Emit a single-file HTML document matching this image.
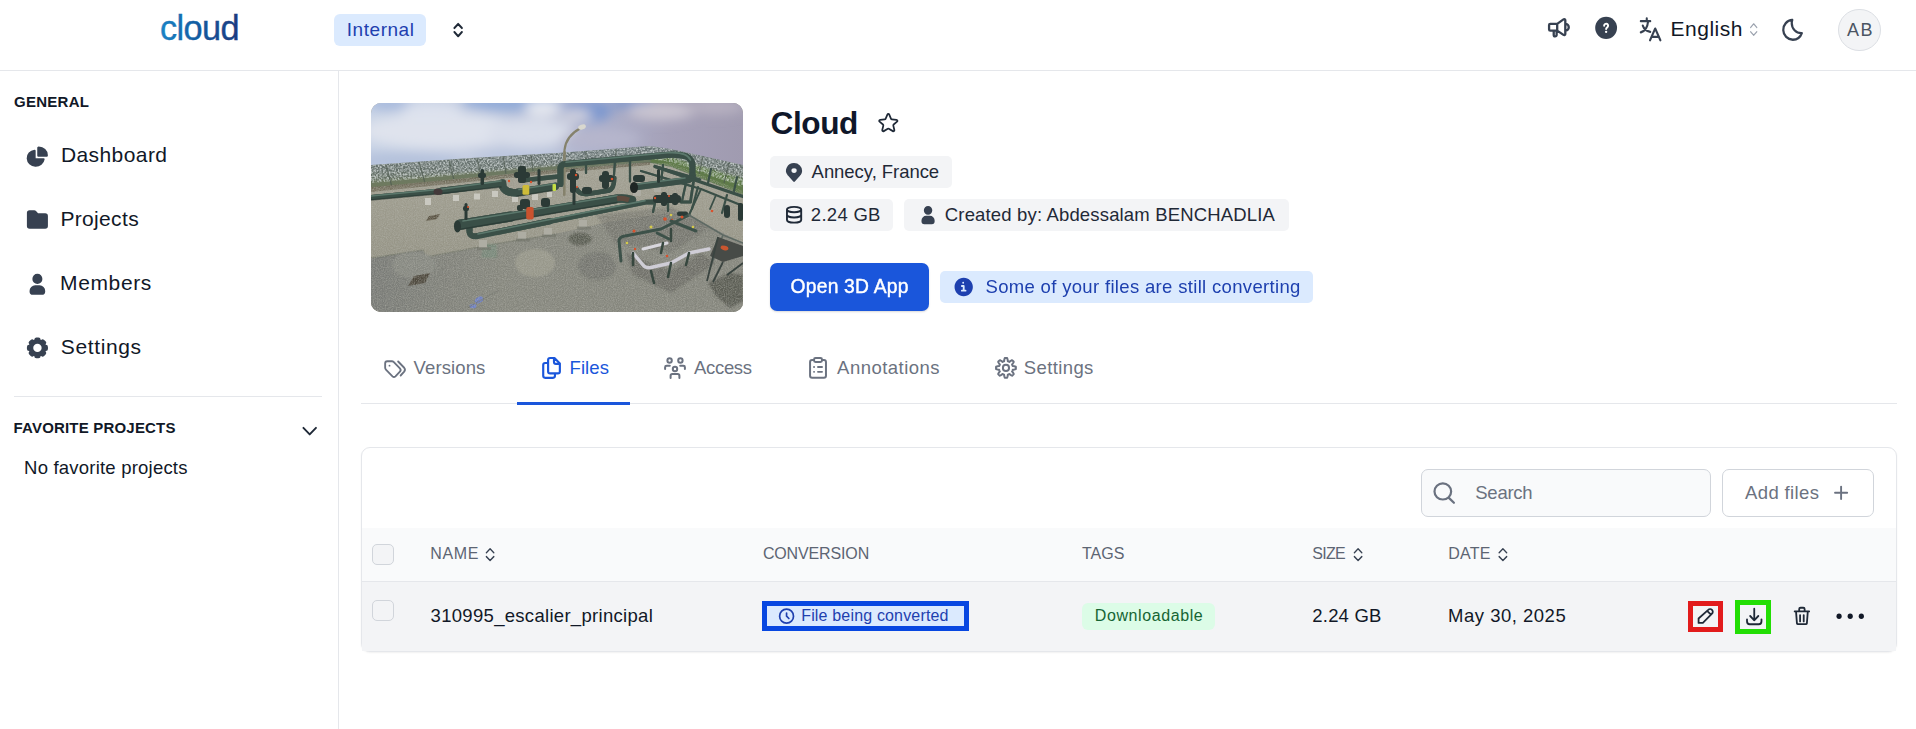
<!DOCTYPE html>
<html lang="en"><head><meta charset="utf-8"><title>Cloud</title>
<style>
*{box-sizing:border-box;margin:0;padding:0}
html,body{width:1916px;height:729px;overflow:hidden;background:#fff}
body{font-family:"Liberation Sans",sans-serif;color:#111827;position:relative}
.a{position:absolute}
.t{position:absolute;white-space:nowrap;line-height:1}
svg{position:absolute;overflow:visible}
#hdr{left:0;top:0;width:1916px;height:71px;border-bottom:1px solid #e5e7eb;background:#fff}
#side{left:0;top:71px;width:339px;height:658px;border-right:1px solid #e5e7eb;background:#fff}
.nav{font-size:21px;color:#111827;left:61px}
.sect{font-size:15px;font-weight:700;color:#111827;left:14px}
.badge{background:#f3f4f6;border-radius:5px;height:32px}
.bt{font-size:18.5px;color:#1f2937}
.tab{font-size:18.5px;color:#6b7280;top:359px}
.th{font-size:16px;color:#5d6573;top:546px}
.td{font-size:18.5px;color:#111827;top:607px}
.ic{fill:#374151}
.st{fill:none;stroke-linecap:round;stroke-linejoin:round}
/*FIT*/
#internal{left:346.8px!important;top:19.7px!important;letter-spacing:0.54px}
#english{left:1670.6px!important;top:17.7px!important;letter-spacing:0.50px}
#ab{left:1847.1px!important;top:20.7px!important;letter-spacing:1.40px}
#general{left:14.1px!important;top:93.7px!important;letter-spacing:0.24px}
#n1{left:60.9px!important;top:143.7px!important;letter-spacing:0.42px}
#n2{left:60.4px!important;top:207.7px!important;letter-spacing:0.34px}
#n3{left:60.1px!important;top:271.7px!important;letter-spacing:0.61px}
#n4{left:60.8px!important;top:335.7px!important;letter-spacing:0.63px}
#fav{left:13.5px!important;top:419.7px!important;letter-spacing:0.19px}
#nofav{left:24.1px!important;top:458.7px!important;letter-spacing:0.21px}
#title{left:770.6px!important;top:107.7px!important;letter-spacing:-0.42px}
#b1{left:811.6px!important;top:162.7px!important;letter-spacing:-0.05px}
#b2{left:810.8px!important;top:205.7px!important;letter-spacing:0.29px}
#b3{left:944.8px!important;top:205.7px!important;letter-spacing:0.16px}
#open{left:790.6px!important;top:277.1px!important;letter-spacing:0.20px}
#info{left:985.5px!important;top:277.7px!important;letter-spacing:0.33px}
#t1{left:413.6px!important;top:358.7px!important;letter-spacing:0.11px}
#t2{left:569.6px!important;top:358.7px!important;letter-spacing:0.06px}
#t3{left:694.0px!important;top:358.7px!important;letter-spacing:-0.32px}
#t4{left:837.1px!important;top:358.7px!important;letter-spacing:0.47px}
#t5{left:1023.8px!important;top:358.7px!important;letter-spacing:0.39px}
#search{left:1475.3px!important;top:483.7px!important;letter-spacing:-0.27px}
#addf{left:1745.0px!important;top:483.7px!important;letter-spacing:0.38px}
#h1{left:430.3px!important;top:545.7px!important;letter-spacing:0.64px}
#h2{left:762.9px!important;top:545.7px!important;letter-spacing:-0.14px}
#h3{left:1081.9px!important;top:545.7px!important;letter-spacing:0.08px}
#h4{left:1312.2px!important;top:545.7px!important;letter-spacing:-0.71px}
#h5{left:1448.2px!important;top:545.7px!important;letter-spacing:0.21px}
#d1{left:430.6px!important;top:606.7px!important;letter-spacing:0.30px}
#conv{left:801.2px!important;top:607.7px!important;letter-spacing:0.17px}
#dl{left:1094.8px!important;top:607.7px!important;letter-spacing:0.59px}
#d4{left:1312.3px!important;top:606.7px!important;letter-spacing:0.20px}
#d5{left:1448.0px!important;top:606.7px!important;letter-spacing:0.51px}
/*ENDFIT*/
</style></head><body>
<!-- HEADER -->
<div id="hdr" class="a"></div>
<svg id="logosvg" style="left:150px;top:0" width="100" height="60" viewBox="0 0 100 60"><defs><linearGradient id="lg" gradientUnits="userSpaceOnUse" x1="10" y1="0" x2="89" y2="0"><stop offset="0" stop-color="#1b84c6"/><stop offset=".5" stop-color="#135a9f"/><stop offset="1" stop-color="#1c3a80"/></linearGradient></defs><text id="logotxt" x="9.900" y="39.800" font-family="Liberation Sans, sans-serif" font-size="34.300" letter-spacing="-0.600" fill="url(#lg)" stroke="url(#lg)" stroke-width=".350">cloud</text></svg>
<div class="a" style="left:334px;top:14px;width:92px;height:32px;border-radius:6px;background:#dbeafe"></div>
<div class="t" id="internal" style="left:347px;top:20px;font-size:19px;color:#1e40af">Internal</div>
<svg id="i-sort0" style="left:449px;top:20px" width="20" height="21" viewBox="0 0 20 21"><g transform="translate(0.15 0.29) scale(0.7496 0.8129)"><path fill="none" stroke="#1f2937" stroke-width="2.6" stroke-linecap="round" stroke-linejoin="round" d="M7 9.500 12 4.500l5 5M7 14.500l5 5 5-5"/></g></svg>
<!-- header right icons -->
<svg id="i-mega" style="left:1544px;top:13px" width="30" height="29" viewBox="0 0 30 29"><g transform="translate(0.46 0.66) scale(1.1579 1.1283)"><path fill="none" stroke="#374151" stroke-width="2" stroke-linecap="round" stroke-linejoin="round" d="M11 9H5a1 1 0 0 0-1 1v4a1 1 0 0 0 1 1h6m0-6v6m0-6 5.419-3.870A1 1 0 0 1 18 5.942v12.114a1 1 0 0 1-1.581.814L11 15m7 0a3 3 0 0 0 0-6M8 15v3.900a1.250 1.250 0 0 0 2.500 0V15"/></g></svg>
<svg id="i-help" style="left:1593px;top:14px" width="28" height="29" viewBox="0 0 28 29"><g transform="translate(0.01 0.47) scale(1.0925 1.1150)"><circle cx="12" cy="12" r="10" fill="#374151"/><path fill="none" stroke="#fff" stroke-width="1.800" stroke-linecap="round" stroke-linejoin="round" d="M10.200 10.100a1.800 1.800 0 1 1 2.800 1.500c-.600.400-1 .800-1 1.500"/><circle cx="12" cy="15.600" r="1.050" fill="#fff"/></g></svg>
<svg id="i-lang" style="left:1638px;top:15px" width="26" height="28" viewBox="0 0 26 28"><g transform="translate(0.32 0.26) scale(0.9933 1.0846)"><path fill="none" stroke="#374151" stroke-width="2.1" stroke-linecap="round" stroke-linejoin="round" d="M8.500 3v2.500M2.500 5.500h9.500M9.800 5.800C9.300 11 6.500 14.500 2.500 15.800M4.500 9.500c1 2.800 3.500 5 7.500 5.800M11.800 23 17 12.300 22.200 23M13.200 20h7.600"/></g></svg>
<div class="t" id="english" style="left:1671px;top:18px;font-size:21px;color:#111827">English</div>
<svg id="i-sort1" style="left:1746px;top:21px" width="16" height="19" viewBox="0 0 16 19"><g transform="translate(0.93 0.16) scale(0.5646 0.7029)"><path fill="none" stroke="#9ca3af" stroke-width="1.9" stroke-linecap="round" stroke-linejoin="round" d="M6.500 9 12 3.800 17.500 9M6.500 15l5.500 5.200L17.500 15"/></g></svg>
<svg id="i-moon" style="left:1780px;top:16px" width="27" height="29" viewBox="0 0 27 29"><g transform="translate(0.07 0.64) scale(1.0621 1.1004)"><path fill="none" stroke="#374151" stroke-width="2.1" stroke-linecap="round" stroke-linejoin="round" d="M12 21a9 9 0 0 1-.500-17.986V3c-.354.966-.500 1.911-.500 3a9 9 0 0 0 9 9c.239 0 .254.018.488 0A9.004 9.004 0 0 1 12 21Z"/></g></svg>
<div class="a" style="left:1838.3px;top:8.9px;width:42.4px;height:42.4px;border-radius:50%;background:#f3f4f6;border:1px solid #dcdfe4"></div>
<div class="t" id="ab" style="left:1846px;top:21px;font-size:18px;color:#4b5563">AB</div>
<!-- SIDEBAR -->
<div id="side" class="a"></div>
<div class="t sect" id="general" style="top:94px">GENERAL</div>
<svg id="i-pie" style="left:24px;top:144px" width="28" height="26" viewBox="0 0 28 26"><g transform="translate(0.49 0.59) scale(1.0633 1.0050)"><path fill="#374151" d="M13.500 2c-.178 0-.356.013-.492.022l-.074.005a1 1 0 0 0-.934.998V11a1 1 0 0 0 1 1h7.975a1 1 0 0 0 .998-.934l.005-.074A7.040 7.040 0 0 0 22 10.500 8.500 8.500 0 0 0 13.500 2Z"/><path fill="#374151" d="M10.500 6.025a1 1 0 0 0-1.065-.998 8.500 8.500 0 1 0 9.538 9.539A1 1 0 0 0 17.975 13.500H10.500V6.025Z"/></g></svg>
<div class="t nav" id="n1" style="top:144px">Dashboard</div>
<svg id="i-folder" style="left:24px;top:207px" width="28" height="26" viewBox="0 0 28 26"><g transform="translate(0.80 0.07) scale(1.0508 1.0300)"><path fill="#374151" d="M2,5.600a2.600,2.600 0 0 1 2.600,-2.600h4.300a2.600,2.600 0 0 1 2,.95l1.700,2.050H19.400a2.600,2.600 0 0 1 2.600,2.600v9.800a2.600,2.600 0 0 1 -2.600,2.600H4.600a2.600,2.600 0 0 1 -2.600,-2.600Z"/></g></svg>
<div class="t nav" id="n2" style="top:208px">Projects</div>
<svg id="i-user" style="left:25px;top:271px" width="26" height="26" viewBox="0 0 26 26"><g transform="translate(0.35 0.65) scale(1.0029 1.0092)"><path fill="#374151" d="M12 2.200a5 5 0 1 0 0 10 5 5 0 0 0 0-10ZM4.200 19.600v-.500a5.600 5.600 0 0 1 5.600-5.600h4.400a5.600 5.600 0 0 1 5.600 5.600v.500a3.400 3.400 0 0 1-3.400 3.400H7.600a3.400 3.400 0 0 1-3.400-3.400Z"/></g></svg>
<div class="t nav" id="n3" style="top:272px">Members</div>
<svg id="i-cog" style="left:24px;top:335px" width="28" height="27" viewBox="0 0 28 27"><g transform="translate(0.83 0.54) scale(1.0508 1.0333)"><path fill="#374151" fill-rule="evenodd" d="M9.586 2.586A2 2 0 0 1 11 2h2a2 2 0 0 1 2 2v.089l.473.196.063-.063a2.002 2.002 0 0 1 2.828 0l1.414 1.414a2 2 0 0 1 0 2.827l-.063.064.196.473H20a2 2 0 0 1 2 2v2a2 2 0 0 1-2 2h-.089l-.196.473.063.063a2.002 2.002 0 0 1 0 2.828l-1.414 1.414a2 2 0 0 1-2.828 0l-.063-.063-.473.196V20a2 2 0 0 1-2 2h-2a2 2 0 0 1-2-2v-.089l-.473-.196-.063.063a2.002 2.002 0 0 1-2.828 0l-1.414-1.414a2 2 0 0 1 0-2.827l.063-.064L4.089 15H4a2 2 0 0 1-2-2v-2a2 2 0 0 1 2-2h.090l.195-.473-.063-.063a2 2 0 0 1 0-2.828l1.414-1.414a2 2 0 0 1 2.827 0l.064.063L9 4.089V4a2 2 0 0 1 .586-1.414ZM8 12a4 4 0 1 1 8 0 4 4 0 0 1-8 0Z" clip-rule="evenodd"/></g></svg>
<div class="t nav" id="n4" style="top:336px">Settings</div>
<div class="a" style="left:14px;top:396px;width:308px;height:1px;background:#e5e7eb"></div>
<div class="t sect" id="fav" style="top:420px">FAVORITE PROJECTS</div>
<svg id="i-chev" style="left:298px;top:419px" width="25" height="26" viewBox="0 0 25 26"><g transform="translate(0.11 0.29) scale(0.9650 1.0058)"><path fill="none" stroke="#1f2937" stroke-width="2" stroke-linecap="round" stroke-linejoin="round" d="m5.500 8.500 6.500 6.500 6.500-6.500"/></g></svg>
<div class="t" id="nofav" style="left:25px;top:459px;font-size:18.5px;color:#111827">No favorite projects</div>
<!-- MAIN -->
<div class="a" id="photo" style="left:371px;top:103px;width:372px;height:209px;border-radius:10px;overflow:hidden;background:#8b8a7c"><!--PHOTO--><svg id="photosvg" style="left:0;top:0" width="372" height="209" viewBox="0 0 372 209">
<defs>
<linearGradient id="skyh" x1="0" x2="1" y1="0" y2="0"><stop offset="0" stop-color="#c9d4e6"/><stop offset=".35" stop-color="#c3cbdf"/><stop offset=".6" stop-color="#aeb2cc"/><stop offset=".8" stop-color="#a5a1b8"/><stop offset="1" stop-color="#a09bb0"/></linearGradient>
<linearGradient id="fenceg" x1="0" x2="0" y1="0" y2="1"><stop offset="0" stop-color="#6b7779"/><stop offset=".5" stop-color="#66716b"/><stop offset="1" stop-color="#6a765a"/></linearGradient>
<linearGradient id="gravel" x1="0" x2="0" y1="0" y2="1"><stop offset="0" stop-color="#a3a193"/><stop offset="1" stop-color="#8d8c7e"/></linearGradient>
<linearGradient id="conc" x1="0" x2="1" y1="0" y2="0"><stop offset="0" stop-color="#787a76"/><stop offset=".35" stop-color="#85867d"/><stop offset="1" stop-color="#84857c"/></linearGradient>
<filter id="fb1" x="-20%" y="-20%" width="140%" height="140%"><feGaussianBlur stdDeviation="1"/></filter>
<filter id="fb3" x="-30%" y="-30%" width="160%" height="160%"><feGaussianBlur stdDeviation="3"/></filter>
<filter id="fb6" x="-40%" y="-40%" width="180%" height="180%"><feGaussianBlur stdDeviation="6"/></filter>
<filter id="fb05"><feGaussianBlur stdDeviation=".6"/></filter>
<filter id="noise" x="0" y="0" width="100%" height="100%"><feTurbulence type="fractalNoise" baseFrequency=".9" numOctaves="2" seed="3"/><feColorMatrix type="matrix" values="0 0 0 0 .5  0 0 0 0 .5  0 0 0 0 .45  .9 .9 .9 0 -1.05"/></filter>
<filter id="speck" x="0" y="0" width="100%" height="100%"><feTurbulence type="fractalNoise" baseFrequency=".55" numOctaves="2" seed="8"/><feColorMatrix type="matrix" values="0 0 0 0 .85  0 0 0 0 .89  0 0 0 0 .9  1.5 1.5 1.5 0 -1.85"/></filter>
<clipPath id="fclip"><path d="M0,62 L100,55 186,50 279,43 300,46 372,62 372,84 300,59 279,56 186,63 0,80Z"/></clipPath>
<clipPath id="gclip"><path d="M0,84 L186,66 279,58 300,60 372,88 372,209 0,209Z"/></clipPath>
</defs>
<!-- sky -->
<rect width="372" height="100" fill="url(#skyh)"/>
<g filter="url(#fb6)">
 <ellipse cx="18" cy="0" rx="22" ry="7" fill="#a5b8dc"/>
 <ellipse cx="140" cy="-2" rx="50" ry="11" fill="#93acd8"/>
 <ellipse cx="215" cy="8" rx="26" ry="12" fill="#7b97cf"/>
 <ellipse cx="262" cy="0" rx="22" ry="7" fill="#7f98cc"/>
 <ellipse cx="70" cy="28" rx="80" ry="18" fill="#dfe3ed"/>
 <ellipse cx="160" cy="30" rx="45" ry="15" fill="#d9deea"/>
 <ellipse cx="172" cy="5" rx="18" ry="8" fill="#e6e9f0"/>
 <ellipse cx="60" cy="8" rx="30" ry="8" fill="#dde2ee"/>
 <ellipse cx="30" cy="58" rx="60" ry="9" fill="#b4c1db"/>
 <ellipse cx="150" cy="52" rx="50" ry="6" fill="#b9c5dd"/>
 <ellipse cx="205" cy="12" rx="16" ry="6" fill="#d5d5df"/>
 <ellipse cx="290" cy="8" rx="34" ry="9" fill="#cbc6d1"/>
 <ellipse cx="345" cy="4" rx="30" ry="7" fill="#b9b3c2"/>
 <ellipse cx="230" cy="36" rx="40" ry="10" fill="#b6b6cc"/>
</g>
<!-- fence band -->
<path d="M0,62 L100,55 186,50 279,43 300,46 372,62 372,92 300,64 279,60 186,68 0,86Z" fill="url(#fenceg)"/>
<path d="M279,52 L300,54 372,76 372,92 300,64 279,60Z" fill="#5f7a48" filter="url(#fb1)"/>
<path d="M0,78 L186,62 279,55 279,60 186,68 0,87Z" fill="#6f7b5f" opacity=".75" filter="url(#fb1)"/>
<g clip-path="url(#fclip)"><rect width="372" height="100" filter="url(#speck)" opacity=".62"/></g>
<g stroke="#4e5a50" stroke-width="1.2" opacity=".7"><path d="M15,62 l6,22M48,59 l6,21M78,57 l5,20M106,55 l4,19M132,53 l3,18M160,52 l2,16M215,48v14M245,46v14M332,53l-4,18M358,60l-5,20"/></g>
<!-- ground -->
<path d="M0,86 L186,68 279,60 300,64 372,92 372,209 0,209Z" fill="url(#gravel)"/>
<path d="M0,84 L186,66.500 279,59 279,62 186,70 0,89Z" fill="#6f6a58" opacity=".8" filter="url(#fb05)"/>
<!-- concrete -->
<path d="M0,155 L52,147 55,154 130,140 186,130.500 240,118.500 290,111 312,110 372,140 372,209 0,209Z" fill="url(#conc)"/>
<path d="M0,155 L52,147 55,154 130,140 186,131" fill="none" stroke="#75776b" stroke-width="1.5" opacity=".7"/>
<g filter="url(#fb1)">
 <ellipse cx="164" cy="160" rx="20" ry="14" fill="#97978a"/>
 <ellipse cx="43" cy="162" rx="22" ry="13" fill="#868881"/>
 <ellipse cx="226" cy="163" rx="19" ry="14" fill="#74766f"/>
 <ellipse cx="209" cy="136" rx="11.500" ry="6.500" fill="#5a5d52"/>
 <path d="M112,141 h14 v14 h-16Z" fill="#6f8a78" opacity=".55"/>
 <path d="M337,180 L359,170 372,172 372,198 359,205 344,192Z" fill="#55574f" opacity=".9"/>
 <path d="M255,150 L300,168 330,150 345,160 300,190 262,172Z" fill="#5f615a" opacity=".6"/>
 <path d="M225,112 L300,104 340,124 300,150 245,140Z" fill="#676961" opacity=".5"/>
</g>
<path d="M43,173 l16,-3 -5,10 -17,3Z" fill="#4d483d"/><path d="M58,113 l11,-2 -3,5 -11,2Z" fill="#5d5646"/>
<ellipse cx="108" cy="197" rx="4.500" ry="3" fill="#6d7fc4" transform="rotate(-30 108 197)"/><ellipse cx="102" cy="203" rx="3.500" ry="2.300" fill="#6d7fc4"/>
<path d="M96,205 L128,187" stroke="#6a6c66" stroke-width="1.200" opacity=".6"/>
<rect y="60" width="372" height="149" filter="url(#noise)" clip-path="url(#gclip)" opacity=".55"/>
<!-- support blocks -->
<g fill="#c9c8c0"><rect x="54" y="95" width="6" height="7"/><rect x="82" y="92" width="6" height="6"/><rect x="103" y="90.500" width="6" height="6"/><rect x="121" y="88" width="6" height="6"/><rect x="141" y="93" width="6" height="6"/><rect x="161" y="91" width="6" height="6"/><rect x="176" y="89" width="5" height="5"/></g>
<g fill="#aeada3"><rect x="108" y="137" width="8" height="8"/><rect x="147" y="129" width="8" height="7"/><rect x="173" y="125" width="8" height="7"/><rect x="208" y="117" width="8" height="7"/><rect x="262" y="87" width="8" height="6"/><rect x="283" y="84" width="7" height="5"/></g>
<g fill="#6f7268" opacity=".55" filter="url(#fb05)"><rect x="106" y="144" width="14" height="3"/><rect x="145" y="135.500" width="14" height="3"/><rect x="171" y="131.500" width="14" height="3"/><rect x="206" y="123.500" width="14" height="3"/></g>
<!-- lamp post -->
<path d="M193.200,92.500 L193.500,47 Q195,33 209,25.500" fill="none" stroke="#85826c" stroke-width="2.200"/><ellipse cx="211" cy="24" rx="4" ry="2.500" fill="#d9d8cf" transform="rotate(-20 211 24)"/>
<!-- pipes -->
<g fill="none" stroke-linecap="round" stroke-linejoin="round">
 <g stroke="#3a4f47">
  <path d="M0,94.500 L70,88" stroke-width="5"/><path d="M70,88 L130,80.500" stroke-width="6.800"/>
  <path d="M131.500,80 Q131,89.500 145,89.800 L184,83.400" stroke-width="7.500"/>
  <path d="M150,77.500 L188,73.500" stroke-width="4.500"/>
  <path d="M189.500,81 V66 Q189.500,61.400 194,61 L296.500,51.800 Q321,50 321.500,62 V73" stroke-width="6.200"/>
  <path d="M321.500,73 Q321,76.500 314,77.500 L263,84.200" stroke-width="6.800"/>
  <path d="M206,86.500 Q208,91.500 216,91 L238,87.500 Q243,86 243.300,75" stroke-width="4.500"/>
  <path d="M88.500,121.800 L140,113.500" stroke-width="10"/><path d="M140,113.500 L192.500,104.600 246,95.700 Q254,94.800 261,97" stroke-width="8.500"/>
  <path d="M98.500,124 V129 Q99,134 105.500,133.200 L178.800,118.300" stroke-width="6"/><path d="M178.800,118.300 L274.800,99.100 283,99" stroke-width="4.800"/>
  <path d="M284,63.500 L372,93.500" stroke-width="3.200"/>
  <path d="M288.500,64.800 L329,76.500" stroke-width="2.500"/>
  <path d="M270,68 L330,86 372,103" stroke-width="2.200"/>
  <path d="M310,99 H319.500 L322.500,79" stroke-width="2.800"/>
  <path d="M259,57V78.500M215,60v10M244,58l-1,14M292,62l-2,18M315,80l-4,18M327,84l-6,22M356,92l-5,18M340,66l-3,14M366,74l-3,14M297,100v8M284,100l-2,9" stroke-width="2.200"/>
  <path d="M330,86 L318,112 M345,92 l-6,14" stroke-width="1.800"/>
 </g>
 <g stroke="#678679" stroke-width="1.600" opacity=".75">
  <path d="M0,93 L70,86.300 130,78"/><path d="M148,86.500 184,80.800"/><path d="M195,59.200 L296.500,49.800 Q316,48.500 319.500,57"/><path d="M92,118 140,110.300 192.500,101.500 246,92.800"/><path d="M266,81.300 L314,75"/><path d="M107,131 178.800,116.500 274,97.600"/>
 </g>
 <g stroke="#22302c" stroke-width="1.500" opacity=".55">
  <path d="M90,126.300 140,117.800 192.500,108.500 246,99.500"/><path d="M0,97 70,90.500 130,84"/><path d="M146,93.200 184,87"/>
 </g>
</g>
<!-- valves / blobs -->
<g fill="#2b3a36">
 <ellipse cx="86.500" cy="123.500" rx="3.500" ry="6"/><ellipse cx="263" cy="84.500" rx="4" ry="5.500" fill="#1f2624"/><ellipse cx="67" cy="88.700" rx="4.500" ry="3.200" fill="#43393a"/>
 <rect x="109.500" y="66" width="3.500" height="16" rx="1.500"/><rect x="107" y="70" width="8" height="5" rx="2"/>
 <rect x="147" y="63" width="8" height="17" rx="2.500"/><rect x="143" y="69" width="16" height="6" rx="2.500"/><rect x="166.500" y="66" width="3" height="16" rx="1.500"/>
 <rect x="199" y="66" width="6" height="24" rx="2.500"/><rect x="196" y="70" width="12" height="7" rx="3"/>
 <rect x="231" y="68" width="7" height="18" rx="3"/><rect x="228" y="72" width="15" height="7" rx="3"/>
 <rect x="262" y="72" width="12" height="7" rx="3"/><rect x="286" y="66" width="3" height="14" rx="1.500"/>
 <rect x="93.500" y="100" width="3" height="17" rx="1.500"/><rect x="92" y="103" width="6" height="5" rx="2"/>
 <rect x="149" y="96" width="10" height="10" rx="3"/><rect x="146" y="102" width="6" height="6" rx="2"/><rect x="170" y="95" width="9" height="9" rx="3"/>
 <rect x="201.500" y="84" width="3" height="18" rx="1.500"/><rect x="211" y="84" width="10" height="7" rx="3"/>
 <rect x="282" y="92" width="28" height="8" rx="3.500"/><rect x="290" y="89" width="6" height="14" rx="2.500"/><rect x="301" y="90" width="6" height="12" rx="2.500"/>
 <rect x="353" y="102" width="6" height="13" rx="3"/><rect x="367" y="100" width="5" height="18" rx="2"/>
 <rect x="306" y="108.500" width="11" height="4.500" rx="2"/>
</g>
<rect x="151.500" y="82" width="6.800" height="9.800" rx="1.500" fill="#cdbb38"/><rect x="181.500" y="81" width="3.500" height="7" rx="1" fill="#c6df45"/>
<rect x="155.200" y="104" width="7.500" height="12.500" rx="2" fill="#c9522e"/>
<path d="M246,95.500 q6,-1 12,1.500" stroke="#6a4a3d" stroke-width="5" fill="none" opacity=".8"/>
<g fill="#d9512c"><circle cx="138" cy="78" r="1.200"/><circle cx="160" cy="79" r="1.200"/><circle cx="205" cy="72" r="1.200"/><circle cx="241" cy="76" r="1.300"/><circle cx="284" cy="95" r="1.200"/><circle cx="301" cy="117" r="1.200"/><circle cx="341" cy="108" r="1.300"/><circle cx="97" cy="104" r="1.100"/><circle cx="206" cy="84" r="1.100"/><circle cx="298" cy="93" r="1.100"/></g>
<!-- equipment cluster -->
<g fill="none" stroke-linecap="round" stroke-linejoin="round">
 <path d="M250,158 L248,138 Q248,134 254,133 L290,126 306,118 318,112" stroke="#3d5149" stroke-width="3"/>
 <path d="M262,150 L272,162 Q275,166 282,164 L300,160 318,150 338,146" stroke="#cfcdd6" stroke-width="3.500"/>
 <path d="M272,146 L296,140" stroke="#d8d6dd" stroke-width="3"/>
 <path d="M280,168 L283,180 M300,160l-3,14M318,150l-3,12M262,150v12M300,126v12M292,140l-2,10" stroke="#37473f" stroke-width="2.500"/>
 <path d="M318,112 L352,132 338,168 M352,132 L372,140" stroke="#5f6a64" stroke-width="1.500"/>
 <path d="M300,118 L325,128 M286,130 l12,6" stroke="#3d5149" stroke-width="3"/>
</g>
<g fill="#d9512c"><circle cx="263" cy="128" r="1.500"/><circle cx="294" cy="116" r="1.800"/><circle cx="311" cy="114" r="1.500"/><circle cx="296" cy="153" r="1.300"/><circle cx="264" cy="146" r="1.200"/></g>
<g fill="#d4c94a"><circle cx="280" cy="124" r="1.500"/><circle cx="300" cy="112" r="1.300"/><circle cx="256" cy="140" r="1.300"/><circle cx="322" cy="124" r="1.300"/></g>
<!-- gate panel -->
<path d="M347,134 L372,143 372,153 352,159 339,153Z" fill="#474b47"/><ellipse cx="353.500" cy="145" rx="4" ry="2.200" fill="#c9562f" transform="rotate(15 353.500 145)"/>
<path d="M347,134 L336,178 M352,159 l-10,20M372,160 l-16,12" stroke="#3a4440" stroke-width="1.800" fill="none"/>
</svg><!--/PHOTO--></div>
<div class="t" id="title" style="left:770px;top:106px;font-size:31.6px;font-weight:700;color:#0f172a">Cloud</div>
<svg id="i-star" style="left:876px;top:109px" width="26" height="27" viewBox="0 0 26 27"><g transform="translate(0.00 0.17) scale(1.0262 1.0550)"><path fill="none" stroke="#1f2937" stroke-width="1.7" stroke-linecap="round" stroke-linejoin="round" d="M11.083 5.104c.350-.800 1.485-.800 1.834 0l1.752 4.022a1 1 0 0 0 .840.597l4.463.342c.900.069 1.255 1.200.556 1.771l-3.330 2.723a1 1 0 0 0-.337 1.016l1.030 4.119c.214.858-.710 1.552-1.474 1.106l-3.913-2.281a1 1 0 0 0-1.008 0L7.583 20.800c-.764.446-1.688-.248-1.474-1.106l1.030-4.119A1 1 0 0 0 6.800 14.560l-3.330-2.723c-.698-.571-.342-1.702.557-1.771l4.462-.342a1 1 0 0 0 .840-.597l1.753-4.022Z"/></g></svg>
<div class="a badge" style="left:770px;top:156px;width:182px;height:31.8px"></div>
<svg id="i-pin" style="left:781px;top:161px" width="27" height="24" viewBox="0 0 27 24"><g transform="translate(0.93 0.24) scale(1.0108 0.9362)"><path fill="#374151" fill-rule="evenodd" d="M11.906 1.994a8.002 8.002 0 0 1 8.090 8.421 7.996 7.996 0 0 1-1.297 3.957.996.996 0 0 1-.133.204l-.108.129c-.178.243-.370.477-.573.699l-5.112 6.224a1 1 0 0 1-1.545 0L5.982 15.260l-.002-.002a18.146 18.146 0 0 1-.309-.380l-.133-.163a.999.999 0 0 1-.130-.202 7.995 7.995 0 0 1 6.498-12.518ZM14.600 9.997a2.600 2.600 0 1 1-5.200 0 2.600 2.600 0 0 1 5.200 0Z" clip-rule="evenodd"/></g></svg>
<div class="t bt" id="b1" style="left:811px;top:163px">Annecy, France</div>
<div class="a badge" style="left:770px;top:198.9px;width:122.8px;height:31.7px"></div>
<svg id="i-db" style="left:782px;top:203px" width="25" height="25" viewBox="0 0 25 25"><g transform="translate(0.70 0.25) scale(0.9487 0.9583)"><path fill="none" stroke="#1f2937" stroke-width="2" stroke-linecap="round" stroke-linejoin="round" d="M19.500 6.600c0 1.550-3.360 2.800-7.500 2.800s-7.500-1.250-7.500-2.800m15 0c0-1.550-3.360-2.800-7.500-2.800s-7.500 1.250-7.500 2.800m15 0v10.800c0 1.550-3.360 2.800-7.500 2.800s-7.500-1.250-7.500-2.800V6.600m0 5.400c0 1.550 3.360 2.800 7.500 2.800s7.500-1.250 7.500-2.800"/></g></svg>
<div class="t bt" id="b2" style="left:811px;top:206px">2.24 GB</div>
<div class="a badge" style="left:904px;top:198.9px;width:385px;height:31.7px"></div>
<svg id="i-user2" style="left:917px;top:204px" width="23" height="23" viewBox="0 0 23 23"><g transform="translate(0.92 0.02) scale(0.8454 0.8754)"><path fill="#374151" d="M12 2.200a5 5 0 1 0 0 10 5 5 0 0 0 0-10ZM4.200 19.600v-.500a5.600 5.600 0 0 1 5.600-5.600h4.400a5.600 5.600 0 0 1 5.600 5.600v.500a3.400 3.400 0 0 1-3.400 3.400H7.600a3.400 3.400 0 0 1-3.400-3.400Z"/></g></svg>
<div class="t bt" id="b3" style="left:945px;top:206px">Created by: Abdessalam BENCHADLIA</div>
<div class="a" style="left:770px;top:263px;width:159px;height:48px;border-radius:7px;background:#1a56db;box-shadow:0 1px 2px rgba(0,0,0,.15)"></div>
<div class="t" id="open" style="left:791px;top:277px;font-size:19.3px;font-weight:400;-webkit-text-stroke:.4px #fff;color:#fff">Open 3D App</div>
<div class="a" style="left:940px;top:271px;width:373px;height:32px;border-radius:5px;background:#dbeafe"></div>
<svg id="i-info" style="left:952px;top:275px" width="24" height="25" viewBox="0 0 24 25"><g transform="translate(0.71 0.87) scale(0.9158 0.9225)"><path fill="#1e40af" fill-rule="evenodd" d="M2 12C2 6.477 6.477 2 12 2s10 4.477 10 10-4.477 10-10 10S2 17.523 2 12Zm9.408-5.500a1 1 0 1 0 0 2h.010a1 1 0 1 0 0-2h-.010ZM10 10a1 1 0 1 0 0 2h1v3h-1a1 1 0 1 0 0 2h4a1 1 0 1 0 0-2h-1v-4a1 1 0 0 0-1-1h-2Z" clip-rule="evenodd"/></g></svg>
<div class="t" id="info" style="left:986px;top:278px;font-size:18.5px;color:#1e40af">Some of your files are still converting</div>
<!-- TABS -->
<div class="a" style="left:361px;top:403px;width:1536px;height:1px;background:#e5e7eb"></div>
<div class="a" style="left:517px;top:402px;width:113px;height:3px;background:#1a56db"></div>
<svg id="i-tags" style="left:383px;top:358px" width="24" height="25" viewBox="0 0 24 25"><g transform="translate(0.30 0.33) scale(0.9279 0.9529)"><path fill="none" stroke="#6b7280" stroke-width="2" stroke-linecap="round" stroke-linejoin="round" d="M2,5.300Q2,3 4.300,3H9.200Q10.300,3 11.100,3.800L17.900,10.600Q19.500,12.300 17.900,14L13.100,18.900Q11.500,20.400 9.900,18.900L2.800,11.900Q2,11.100 2,10Z"/><circle cx="6.700" cy="7.700" r="1" fill="#6b7280"/><path fill="none" stroke="#6b7280" stroke-width="2" stroke-linecap="round" stroke-linejoin="round" d="M16,3.300 22.500,9.900Q24.200,12 22.500,14L18.700,18"/></g></svg>
<div class="t tab" id="t1" style="left:414px">Versions</div>
<svg id="i-files" style="left:540px;top:356px" width="25" height="25" viewBox="0 0 25 25"><g transform="translate(0.28 0.05) scale(0.9787 0.9888)"><path fill="none" stroke="#1a56db" stroke-width="2.2" stroke-linecap="round" stroke-linejoin="round" d="M10,2H14.500L20,7.500V15.500a2,2 0 0 1 -2,2H10a2,2 0 0 1 -2,-2V4a2,2 0 0 1 2,-2ZM14,2.500V6a2,2 0 0 0 2,2H19.500M7.500,7H5a2,2 0 0 0 -2,2V20a2,2 0 0 0 2,2H13a2,2 0 0 0 2,-2V18"/></g></svg>
<div class="t tab" id="t2" style="left:570px;color:#1a56db">Files</div>
<svg id="i-users" style="left:663px;top:356px" width="25" height="25" viewBox="0 0 25 25"><g transform="translate(0.00 0.11) scale(1.0000 0.9908)"><g fill="none" stroke="#6b7280" stroke-width="2" stroke-linecap="round" stroke-linejoin="round"><circle cx="6.600" cy="4.400" r="2.200"/><circle cx="17.400" cy="4.400" r="2.200"/><circle cx="12" cy="13" r="2.200"/><path d="M2.100 13V11.300Q2.100 9.800 3.600 9.800H6.800M21.900 13V11.300Q21.900 9.800 20.400 9.800H17.200M7.600 22.100V19.700Q7.600 18 9.300 18H14.700Q16.400 18 16.400 19.700V22.100"/></g></g></svg>
<div class="t tab" id="t3" style="left:694px">Access</div>
<svg id="i-clip" style="left:806px;top:356px" width="25" height="25" viewBox="0 0 25 25"><g transform="translate(0.09 0.05) scale(0.9938 0.9888)"><g fill="none" stroke="#6b7280" stroke-width="2" stroke-linecap="round" stroke-linejoin="round"><rect width="8" height="4" x="8" y="2" rx="1.500" ry="1.500"/><path d="M16 4h2a2 2 0 0 1 2 2v14a2 2 0 0 1-2 2H6a2 2 0 0 1-2-2V6a2 2 0 0 1 2-2h2M12 11h4M12 16h4M8 11h.010M8 16h.010"/></g></g></svg>
<div class="t tab" id="t4" style="left:837px">Annotations</div>
<svg id="i-cog2" style="left:994px;top:356px" width="25" height="25" viewBox="0 0 25 25"><g transform="translate(0.05 0.05) scale(0.9925 0.9888)"><path fill="none" stroke="#6b7280" stroke-width="2" stroke-linecap="round" stroke-linejoin="round" d="M12.00,2.00 12.39,2.01 12.78,2.03 13.18,2.07 13.45,2.83 13.66,3.66 13.80,4.50 13.90,5.26 14.16,5.34 14.42,5.43 14.68,5.53 14.93,5.64 15.18,5.76 15.42,5.89 16.03,5.42 16.72,4.93 17.46,4.49 18.19,4.15 18.49,4.40 18.79,4.66 19.07,4.93 19.34,5.21 19.60,5.51 19.85,5.81 19.51,6.54 19.07,7.28 18.58,7.97 18.11,8.58 18.24,8.82 18.36,9.07 18.47,9.32 18.57,9.58 18.66,9.84 18.74,10.10 19.50,10.20 20.34,10.34 21.17,10.55 21.93,10.82 21.97,11.22 21.99,11.61 22.00,12.00 21.99,12.39 21.97,12.78 21.93,13.18 21.17,13.45 20.34,13.66 19.50,13.80 18.74,13.90 18.66,14.16 18.57,14.42 18.47,14.68 18.36,14.93 18.24,15.18 18.11,15.42 18.58,16.03 19.07,16.72 19.51,17.46 19.85,18.19 19.60,18.49 19.34,18.79 19.07,19.07 18.79,19.34 18.49,19.60 18.19,19.85 17.46,19.51 16.72,19.07 16.03,18.58 15.42,18.11 15.18,18.24 14.93,18.36 14.68,18.47 14.42,18.57 14.16,18.66 13.90,18.74 13.80,19.50 13.66,20.34 13.45,21.17 13.18,21.93 12.78,21.97 12.39,21.99 12.00,22.00 11.61,21.99 11.22,21.97 10.82,21.93 10.55,21.17 10.34,20.34 10.20,19.50 10.10,18.74 9.84,18.66 9.58,18.57 9.32,18.47 9.07,18.36 8.82,18.24 8.58,18.11 7.97,18.58 7.28,19.07 6.54,19.51 5.81,19.85 5.51,19.60 5.21,19.34 4.93,19.07 4.66,18.79 4.40,18.49 4.15,18.19 4.49,17.46 4.93,16.72 5.42,16.03 5.89,15.42 5.76,15.18 5.64,14.93 5.53,14.68 5.43,14.42 5.34,14.16 5.26,13.90 4.50,13.80 3.66,13.66 2.83,13.45 2.07,13.18 2.03,12.78 2.01,12.39 2.00,12.00 2.01,11.61 2.03,11.22 2.07,10.82 2.83,10.55 3.66,10.34 4.50,10.20 5.26,10.10 5.34,9.84 5.43,9.58 5.53,9.32 5.64,9.07 5.76,8.82 5.89,8.58 5.42,7.97 4.93,7.28 4.49,6.54 4.15,5.81 4.40,5.51 4.66,5.21 4.93,4.93 5.21,4.66 5.51,4.40 5.81,4.15 6.54,4.49 7.28,4.93 7.97,5.42 8.58,5.89 8.82,5.76 9.07,5.64 9.32,5.53 9.58,5.43 9.84,5.34 10.10,5.26 10.20,4.50 10.34,3.66 10.55,2.83 10.82,2.07 11.22,2.03 11.61,2.01Z"/><circle cx="12" cy="12" r="3.100" fill="none" stroke="#6b7280" stroke-width="2" stroke-linecap="round" stroke-linejoin="round"/></g></svg>
<div class="t tab" id="t5" style="left:1024px">Settings</div>
<!-- CARD -->
<div class="a" id="card" style="left:361px;top:447px;width:1536px;height:205px;border:1px solid #e5e7eb;border-radius:9px;box-shadow:0 1px 2px rgba(0,0,0,.06);background:#fff">
  <div class="a" style="left:0;top:80px;width:1534px;height:54px;background:#f9fafb;border-bottom:1px solid #e5e7eb"></div>
  <div class="a" style="left:0;top:134px;width:1534px;height:69px;background:#f3f4f6"></div>
</div>
<div class="a" style="left:1421px;top:469px;width:290px;height:48px;border:1px solid #d1d5db;border-radius:7px;background:#f9fafb"></div>
<svg id="i-search" style="left:1430px;top:480px" width="29" height="27" viewBox="0 0 29 27"><g transform="translate(0.61 0.15) scale(1.1100 1.0767)"><path fill="none" stroke="#6b7280" stroke-width="2" stroke-linecap="round" stroke-linejoin="round" d="m21 21-4.300-4.300M18.500 10.500a7.500 7.500 0 1 1-15 0 7.500 7.500 0 0 1 15 0Z"/></g></svg>
<div class="t" id="search" style="left:1475px;top:484px;font-size:18.5px;color:#6b7280">Search</div>
<div class="a" style="left:1722px;top:469px;width:152px;height:48px;border:1px solid #d1d5db;border-radius:7px;background:#fff"></div>
<div class="t" id="addf" style="left:1744px;top:484px;font-size:18.5px;color:#6b7280">Add files</div>
<svg id="i-plus" style="left:1830px;top:482px" width="23" height="23" viewBox="0 0 23 23"><g transform="translate(0.70 0.19) scale(0.8667 0.8862)"><path fill="none" stroke="#6b7280" stroke-width="2.2" stroke-linecap="round" stroke-linejoin="round" d="M5 12h14M12 5v14"/></g></svg>
<div class="a" style="left:372px;top:544px;width:22px;height:21px;border:1px solid #d1d5db;border-radius:5px;background:#f3f4f6"></div>
<div class="a" style="left:372px;top:600px;width:22px;height:21px;border:1px solid #d1d5db;border-radius:5px;background:#f3f4f6"></div>
<div class="t th" id="h1" style="left:431px">NAME</div>
<svg id="srt1" style="left:481px;top:545px" width="20" height="21" viewBox="0 0 20 21"><g transform="translate(0.18 0.13) scale(0.7425 0.7925)"><path fill="none" stroke="#374151" stroke-width="1.8" stroke-linecap="round" stroke-linejoin="round" d="M7 9.500 12 4.500l5 5M7 14.500l5 5 5-5"/></g></svg>
<div class="t th" id="h2" style="left:764px">CONVERSION</div>
<div class="t th" id="h3" style="left:1082px">TAGS</div>
<div class="t th" id="h4" style="left:1312px">SIZE</div>
<svg id="srt2" style="left:1349px;top:545px" width="20" height="21" viewBox="0 0 20 21"><g transform="translate(0.18 0.13) scale(0.7425 0.7925)"><path fill="none" stroke="#374151" stroke-width="1.8" stroke-linecap="round" stroke-linejoin="round" d="M7 9.500 12 4.500l5 5M7 14.500l5 5 5-5"/></g></svg>
<div class="t th" id="h5" style="left:1449px">DATE</div>
<svg id="srt3" style="left:1493px;top:545px" width="20" height="21" viewBox="0 0 20 21"><g transform="translate(0.87 0.13) scale(0.7529 0.7925)"><path fill="none" stroke="#374151" stroke-width="1.8" stroke-linecap="round" stroke-linejoin="round" d="M7 9.500 12 4.500l5 5M7 14.500l5 5 5-5"/></g></svg>
<div class="t td" id="d1" style="left:431px">310995_escalier_principal</div>
<div class="a" style="left:761.6px;top:600.8px;width:207.4px;height:30.6px;border:5px solid #0747e1;background:#dbeafe"></div>
<svg id="i-clock" style="left:777px;top:606px" width="20" height="21" viewBox="0 0 20 21"><g transform="translate(0.31 0.83) scale(0.7713 0.7792)"><path fill="none" stroke="#1e40af" stroke-width="2.2" stroke-linecap="round" stroke-linejoin="round" d="M12 8v4l3 3m6-3a9 9 0 1 1-18 0 9 9 0 0 1 18 0Z"/></g></svg>
<div class="t" id="conv" style="left:801px;top:608px;font-size:16px;color:#1e40af">File being converted</div>
<div class="a" style="left:1082px;top:603px;width:133px;height:27px;border-radius:6px;background:#dcfce7"></div>
<div class="t" id="dl" style="left:1095px;top:608px;font-size:16px;color:#166534">Downloadable</div>
<div class="t td" id="d4" style="left:1312px">2.24 GB</div>
<div class="t td" id="d5" style="left:1449px">May 30, 2025</div>
<div class="a" style="left:1688.3px;top:601px;width:34.6px;height:31.3px;border:5px solid #e21b1c"></div>
<svg id="i-pen" style="left:1697px;top:607px" width="20" height="20" viewBox="0 0 20 20"><g transform="translate(0.32 0.52) scale(0.7412 0.7496)"><path fill="none" stroke="#1f2937" stroke-width="2.4" stroke-linecap="round" stroke-linejoin="round" d="M14.700,3.100A3.600,3.600 0 0 1 19.800,8.200L7.500,20.500H1.700V14.700ZM13.900,5 18,9.100" /></g></svg>
<div class="a" style="left:1735.2px;top:600px;width:35.7px;height:34.3px;border:5px solid #22de04"></div>
<svg id="i-dl" style="left:1743px;top:604px" width="24" height="26" viewBox="0 0 24 26"><g transform="translate(0.40 0.79) scale(0.9038 0.9721)"><path fill="none" stroke="#1f2937" stroke-width="2" stroke-linecap="round" stroke-linejoin="round" d="M4 15v2a3 3 0 0 0 3 3h10a3 3 0 0 0 3-3v-2m-8 1V4m0 12-4.500-4.500m4.500 4.500 4.500-4.500"/></g></svg>
<svg id="i-trash" style="left:1791px;top:605px" width="23" height="23" viewBox="0 0 23 23"><g transform="translate(0.05 0.00) scale(0.9050 0.9137)"><path fill="none" stroke="#1f2937" stroke-width="2" stroke-linecap="round" stroke-linejoin="round" d="M4 7h16M10 11v7m4-7v7M9 7V4.500a1.500 1.500 0 0 1 1.500-1.500h3a1.500 1.500 0 0 1 1.500 1.500V7M5.500 7l1 13a1.200 1.200 0 0 0 1.200 1h8.600a1.200 1.200 0 0 0 1.200-1l1-13"/></g></svg>
<svg id="i-dots" style="left:1836px;top:603px" width="27" height="28" viewBox="0 0 27 28"><g transform="translate(0.50 0.13) scale(1.0350 1.0921)"><circle cx="2.500" cy="12" r="2.500" fill="#111827"/><circle cx="13.250" cy="12" r="2.500" fill="#111827"/><circle cx="24" cy="12" r="2.500" fill="#111827"/></g></svg>
</body></html>
